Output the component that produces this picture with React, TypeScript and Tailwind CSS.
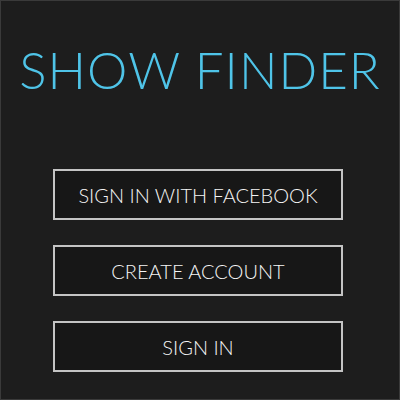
export default function App() {
  const buttons = ["SIGN IN WITH FACEBOOK", "CREATE ACCOUNT", "SIGN IN"];

  return (
    <div className="flex h-[400px] w-[400px] flex-col items-center border border-[#3a3a3a] bg-[#1d1d1d] font-['Lato',sans-serif]">
      <h1 className="mt-[37px] text-[51px] font-light leading-[64px] tracking-[1px] text-[#4fc4e8]">
        SHOW FINDER
      </h1>
      <div className="mr-[4px] mt-[67px] flex flex-col gap-[25px]">
        {buttons.map((label) => (
          <button
            key={label}
            className="flex h-[51px] w-[290px] items-center justify-center border-2 border-[#c4c4c4] bg-[#171717] text-[20px] font-light text-[#f5f5f5]"
          >
            {label}
          </button>
        ))}
      </div>
    </div>
  );
}
